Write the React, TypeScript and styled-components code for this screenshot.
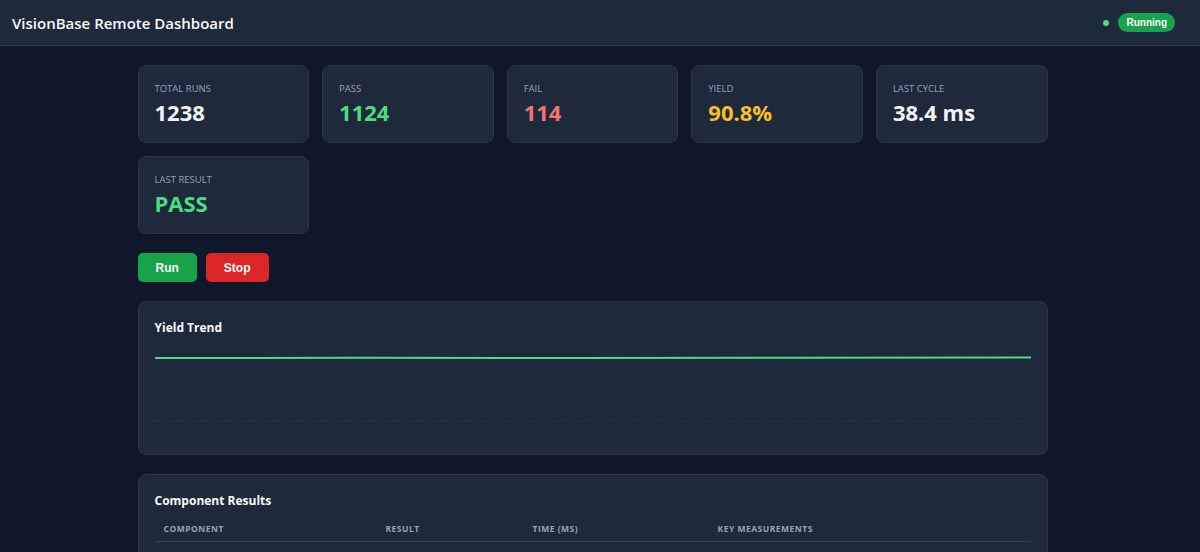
import React from 'react'
import styled, { createGlobalStyle } from 'styled-components'

const GlobalStyle = createGlobalStyle`
  html { color-scheme: dark; }
  body {
    margin: 0;
    background: #0f172a;
    color: #f1f5f9;
    font-family: "Open Sans", "Noto Sans", sans-serif;
  }
`

const Page = styled.div`
  padding-right: 15px;
`

const Header = styled.header`
  display: flex;
  align-items: center;
  justify-content: space-between;
  height: 45px;
  margin-right: -15px;
  padding: 0 25px 0 12px;
  background: #1e293b;
  border-bottom: 1px solid #2c3a4f;
`

const Title = styled.h1`
  margin: 0;
  font-size: 15px;
  font-weight: 600;
  color: #f8fafc;
`

const Status = styled.div`
  display: flex;
  align-items: center;
  gap: 9px;
`

const Dot = styled.span`
  width: 6px;
  height: 6px;
  border-radius: 50%;
  background: #4ade80;
`

const Badge = styled.span`
  background: #16a34a;
  color: #fff;
  font-family: "Liberation Sans", Arial, sans-serif;
  font-size: 10px;
  font-weight: 700;
  padding: 4px 8px;
  border-radius: 999px;
`

const Main = styled.main`
  max-width: 910px;
  margin: 0 auto;
  padding: 19px 0 40px;
  display: flex;
  flex-direction: column;
  gap: 19px;
`

const StatGrid = styled.div`
  display: grid;
  grid-template-columns: repeat(auto-fill, minmax(160px, 1fr));
  gap: 13px;
`

const StatCard = styled.div`
  background: #1e293b;
  border: 1px solid #2a3648;
  border-radius: 8px;
  padding: 16px 16px 17px;
  height: 78px;
  box-sizing: border-box;
`

const StatLabel = styled.div`
  font-size: 9.5px;
  text-transform: uppercase;
  color: #94a3b8;
  line-height: 13px;
`

const StatValue = styled.div<{ $color: string }>`
  font-size: 22px;
  font-weight: 700;
  color: ${(p) => p.$color};
  margin-top: 3px;
  line-height: 28px;
`

const Actions = styled.div`
  display: flex;
  gap: 9px;
`

const ActionButton = styled.button<{ $bg: string }>`
  border: none;
  background: ${(p) => p.$bg};
  color: #fff;
  font-family: "Liberation Sans", Arial, sans-serif;
  font-size: 12px;
  font-weight: 700;
  height: 29px;
  padding: 0 18px;
  border-radius: 5px;
  cursor: pointer;
`

const Panel = styled.section`
  background: #1e293b;
  border: 1px solid #2a3648;
  border-radius: 8px;
  padding: 18px 16px 12px;
`

const PanelTitle = styled.h2`
  margin: 0;
  font-size: 12px;
  font-weight: 700;
  color: #f8fafc;
  line-height: 16px;
`

const Chart = styled.svg`
  display: block;
  width: 100%;
  height: 100px;
  margin-top: 6px;
`

const Table = styled.table`
  width: 100%;
  border-collapse: collapse;
  margin-top: 8px;
  table-layout: fixed;
`

const Th = styled.th<{ $w?: string }>`
  text-align: left;
  font-size: 8.5px;
  font-weight: 700;
  color: #94a3b8;
  text-transform: uppercase;
  letter-spacing: 0.5px;
  padding: 6px 9px 7px;
  border-bottom: 1px solid #334155;
  width: ${(p) => p.$w || 'auto'};
`

const Td = styled.td`
  font-size: 11px;
  color: #e2e8f0;
  padding: 12px 9px 9px;
  border-bottom: 1px solid #2a3648;
`

const ResultTag = styled.span<{ $pass: boolean }>`
  font-weight: 700;
  color: ${(p) => (p.$pass ? '#4ade80' : '#f87171')};
`

const stats = [
  { label: 'Total Runs', value: '1238', color: '#f1f5f9' },
  { label: 'Pass', value: '1124', color: '#4ade80' },
  { label: 'Fail', value: '114', color: '#f87171' },
  { label: 'Yield', value: '90.8%', color: '#fbbf24' },
  { label: 'Last Cycle', value: '38.4 ms', color: '#f1f5f9' },
  { label: 'Last Result', value: 'PASS', color: '#4ade80' },
]

const rows = [
  { name: 'Connector J1', pass: true, time: '12.1', meas: 'offset 0.02 mm, angle 0.4°' },
  { name: 'Screw Hole A', pass: true, time: '8.7', meas: 'diameter 3.01 mm' },
  { name: 'Label Print', pass: true, time: '9.3', meas: 'OCR score 0.98' },
  { name: 'Solder Joint', pass: true, time: '8.3', meas: 'area 1.42 mm²' },
]

function YieldChart() {
  return (
    <Chart viewBox="0 0 877 100" preserveAspectRatio="none">
      <line x1="0" y1="50" x2="877" y2="50" stroke="#2b384c" strokeDasharray="6 6" />
      <line x1="0" y1="79" x2="877" y2="79" stroke="#2b384c" strokeDasharray="6 6" />
      <polyline
        points="0,16 200,15.8 420,16 640,15.8 877,15.6"
        fill="none"
        stroke="#4ade80"
        strokeWidth="2"
      />
    </Chart>
  )
}

export default function App() {
  return (
    <Page>
      <GlobalStyle />
      <Header>
        <Title>VisionBase Remote Dashboard</Title>
        <Status>
          <Dot />
          <Badge>Running</Badge>
        </Status>
      </Header>
      <Main>
        <StatGrid>
          {stats.map((s) => (
            <StatCard key={s.label}>
              <StatLabel>{s.label}</StatLabel>
              <StatValue $color={s.color}>{s.value}</StatValue>
            </StatCard>
          ))}
        </StatGrid>
        <Actions>
          <ActionButton $bg="#16a34a">Run</ActionButton>
          <ActionButton $bg="#dc2626">Stop</ActionButton>
        </Actions>
        <Panel>
          <PanelTitle>Yield Trend</PanelTitle>
          <YieldChart />
        </Panel>
        <Panel>
          <PanelTitle>Component Results</PanelTitle>
          <Table>
            <thead>
              <tr>
                <Th $w="204px">Component</Th>
                <Th $w="129px">Result</Th>
                <Th $w="167px">Time (ms)</Th>
                <Th>Key Measurements</Th>
              </tr>
            </thead>
            <tbody>
              {rows.map((r) => (
                <tr key={r.name}>
                  <Td>{r.name}</Td>
                  <Td>
                    <ResultTag $pass={r.pass}>{r.pass ? 'PASS' : 'FAIL'}</ResultTag>
                  </Td>
                  <Td>{r.time}</Td>
                  <Td>{r.meas}</Td>
                </tr>
              ))}
            </tbody>
          </Table>
        </Panel>
      </Main>
    </Page>
  )
}
